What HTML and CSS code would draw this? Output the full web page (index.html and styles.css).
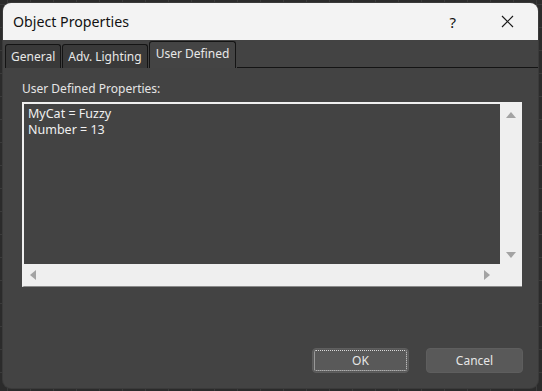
FILE: index.html
```html
<!DOCTYPE html>
<html>
<head>
  <title>Object Properties</title>
  <link rel="stylesheet" href="styles.css">
</head>
<body>
  <div class="window">
    <div class="titlebar">
      <span class="title">Object Properties</span>
      <span class="help">?</span>
      <svg class="close" width="13" height="13" viewBox="0 0 13 13">
        <path d="M1 1 L12 12 M12 1 L1 12" stroke="#1a1a1a" stroke-width="1.2" fill="none"/>
      </svg>
    </div>

    <div class="tabs">
      <div class="tab">General</div>
      <div class="tab">Adv. Lighting</div>
      <div class="tab active">User Defined</div>
      <div class="tab-rest"></div>
    </div>

    <div class="content">
      <label>User Defined Properties:</label>
      <div class="textbox">
        <div class="text-area">
          <div class="lines">MyCat = Fuzzy<br>Number = 13</div>
          <div class="vscroll">
            <span class="arrow up"></span>
            <span class="arrow down"></span>
          </div>
        </div>
        <div class="hscroll">
          <span class="arrow left"></span>
          <span class="arrow right"></span>
        </div>
      </div>
    </div>

    <div class="buttons">
      <button class="btn focused">OK</button>
      <button class="btn">Cancel</button>
    </div>
  </div>
</body>
</html>
```

FILE: styles.css
```css
body {
  margin: 0;
  padding: 3px 0 0 3px;
  width: 542px;
  height: 391px;
  box-sizing: border-box;
  overflow: hidden;
  font-family: "Noto Sans", sans-serif;
  background-color: #2b2b2b;
  background-image:
    linear-gradient(to right, #3a3a3a 1px, transparent 1px),
    linear-gradient(to bottom, #3a3a3a 1px, transparent 1px);
  background-size: 23px 23px;
  background-position: 7px 4px;
}

.window {
  width: 535px;
  height: 385px;
  background: #434343;
  border-radius: 8px;
  overflow: hidden;
  display: flex;
  flex-direction: column;
  box-shadow: 0 0 0 1px #3a3a3a;
}

.titlebar {
  height: 37px;
  background: #f3f3f3;
  display: flex;
  align-items: center;
  padding-left: 10px;
  flex-shrink: 0;
}
.title { font-size: 14.2px; color: #111; flex: 1; }
.help { font-size: 15px; color: #111; margin-right: 45px; }
.close { margin-right: 24px; }

.tabs {
  display: flex;
  align-items: flex-end;
  height: 28px;
  padding-left: 2px;
  flex-shrink: 0;
}
.tab {
  font-size: 12px;
  color: #e8e8e8;
  background: #393939;
  border: 1px solid #141414;
  border-bottom: none;
  border-radius: 3px 3px 0 0;
  height: 23px;
  line-height: 23px;
  padding: 0 5px;
  margin-right: 1px;
}
.tab.active {
  background: #444;
  height: 26px;
  line-height: 24px;
  padding: 0 6px;
}
.tab-rest {
  flex: 1;
  border-bottom: 1px solid #141414;
}

.content {
  padding: 12px 16px 0 19px;
  flex: 1;
}
label {
  display: block;
  font-size: 12px;
  color: #e6e6e6;
  margin-bottom: 5px;
}

.textbox {
  width: 500px;
  border-top: 2px solid #f0f0f0;
  border-left: 2px solid #f0f0f0;
  border-bottom: 1px solid #8a8a8a;
  box-sizing: border-box;
  background: #efefef;
}
.text-area { display: flex; height: 160px; }
.lines {
  flex: 1;
  background: #434343;
  color: #f0f0f0;
  font-size: 12.5px;
  line-height: 16px;
  padding: 2px 4px;
}
.vscroll {
  width: 22px;
  display: flex;
  flex-direction: column;
  justify-content: space-between;
  align-items: center;
  padding: 8px 0 6px;
}
.hscroll {
  height: 22px;
  display: flex;
  justify-content: space-between;
  align-items: center;
  padding: 0 32px 0 6px;
}

.arrow { width: 0; height: 0; border: 5px solid transparent; }
.arrow.up { border-bottom: 6px solid #a3a3a3; border-top: none; }
.arrow.down { border-top: 6px solid #a3a3a3; border-bottom: none; }
.arrow.left { border-right: 6px solid #a3a3a3; border-left: none; }
.arrow.right { border-left: 6px solid #a3a3a3; border-right: none; }

.buttons {
  display: flex;
  justify-content: flex-end;
  gap: 17px;
  padding: 0 15px 15px 0;
}
.btn {
  width: 97px;
  height: 25px;
  background: #595959;
  color: #e6e6e6;
  font-family: "Noto Sans", sans-serif;
  font-size: 12px;
  border: 1px solid #5e5e5e;
  border-radius: 4px;
}
.btn.focused {
  outline: 1px dotted #d8d8d8;
  outline-offset: -3px;
}
```
